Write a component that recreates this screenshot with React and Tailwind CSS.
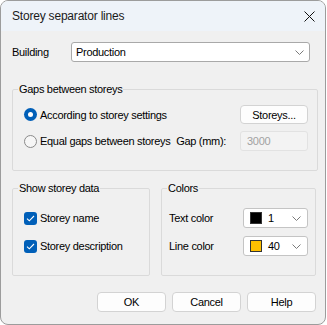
import { useState } from "react";

const FONT = "font-['Liberation_Sans','Arial',sans-serif]";

const Chevron = () => (
  <svg width="9" height="5" viewBox="0 0 9 5" className="text-[#7a7a7a]">
    <path d="M0.5 0.5 L4.5 4.5 L8.5 0.5" fill="none" stroke="currentColor" strokeWidth="1" />
  </svg>
);

const Radio = ({ checked, label, onClick }) => (
  <button type="button" onClick={onClick} className="flex items-center gap-[3px]">
    {checked ? (
      <span className="flex h-[13px] w-[13px] items-center justify-center rounded-full bg-[#005fb8]">
        <span className="h-[5px] w-[5px] rounded-full bg-white" />
      </span>
    ) : (
      <span className="h-[13px] w-[13px] rounded-full border border-[#8a8a8a] bg-[#f6f6f6]" />
    )}
    <span>{label}</span>
  </button>
);

const Check = ({ checked, label, onClick }) => (
  <button type="button" onClick={onClick} className="flex items-center gap-[3px]">
    {checked ? (
      <span className="flex h-[13px] w-[13px] items-center justify-center rounded-[3px] bg-[#005fb8]">
        <svg width="9" height="7" viewBox="0 0 9 7">
          <path d="M1 3.6 L3.3 5.8 L8 1" fill="none" stroke="white" strokeWidth="1.1" />
        </svg>
      </span>
    ) : (
      <span className="h-[13px] w-[13px] rounded-[3px] border border-[#8a8a8a] bg-[#f6f6f6]" />
    )}
    <span>{label}</span>
  </button>
);

const ColorCombo = ({ swatch, value }) => (
  <div className="flex h-[20px] w-[65px] items-center rounded-[3px] border border-[#c4c4c4] bg-white pl-[6px] pr-[6px]">
    <span className={`h-[12px] w-[12px] border border-[#333] ${swatch}`} />
    <span className="ml-[6px] flex-1">{value}</span>
    <Chevron />
  </div>
);

const Group = ({ title, className, children }) => (
  <fieldset className={`rounded-[2px] border border-[#dadada] pl-[5px] ${className}`}>
    <legend className="px-[1px] leading-[16px]">{title}</legend>
    {children}
  </fieldset>
);

export default function App() {
  const [mode, setMode] = useState("settings");
  const [showName, setShowName] = useState(true);
  const [showDesc, setShowDesc] = useState(true);

  return (
    <div className={`h-[325px] w-[327px] bg-white text-[11px] leading-[16px] tracking-[-0.3px] text-black ${FONT}`}>
      <div className="flex h-[325px] w-[326px] flex-col overflow-hidden rounded-[8px] border border-[#9c9c9c] bg-[#f0f0f0]">
        <div className="flex h-[30px] items-center justify-between bg-[#eef3f9] pl-[11px] pr-[10px]">
          <span className="text-[12px] tracking-[-0.2px] text-[#1b1b1b]">Storey separator lines</span>
          <svg width="11" height="11" viewBox="0 0 11 11">
            <path d="M0.5 0.5 L10.5 10.5 M10.5 0.5 L0.5 10.5" stroke="#111" strokeWidth="1" />
          </svg>
        </div>

        <div className="flex flex-1 flex-col pl-[11px] pr-[9px]">
          <div className="mt-[11px] flex items-center">
            <span className="w-[59px]">Building</span>
            <div className="flex h-[20px] w-[239px] items-center justify-between rounded-[3px] border border-[#a9a9a9] bg-white pl-[4px] pr-[5px]">
              <span>Production</span>
              <Chevron />
            </div>
          </div>

          <Group title="Gaps between storeys" className="mt-[19px] w-[306px] pb-[19px] pr-[9px]">
            <div className="flex flex-col gap-[7px] pl-[6px] pt-[8px]">
              <div className="flex h-[19px] items-center justify-between">
                <Radio checked={mode === "settings"} label="According to storey settings" onClick={() => setMode("settings")} />
                <button type="button" className="h-[19px] w-[68px] rounded-[4px] border border-[#d3d3d3] bg-[#fdfdfd]">
                  Storeys...
                </button>
              </div>
              <div className="flex h-[20px] items-center">
                <Radio checked={mode === "equal"} label="Equal gaps between storeys" onClick={() => setMode("equal")} />
                <span className="ml-auto mr-[14px]">Gap (mm):</span>
                <div className="flex h-[20px] w-[68px] items-center rounded-[3px] border border-[#e2e2e2] bg-[#f3f3f3] pl-[6px] text-[#a2a2a2]">
                  3000
                </div>
              </div>
            </div>
          </Group>

          <div className="mt-[9px] flex gap-[11px]">
            <Group title="Show storey data" className="w-[139px] pb-[19px]">
              <div className="flex flex-col gap-[8px] pl-[6px] pt-[12px]">
                <div className="flex h-[20px] items-center">
                  <Check checked={showName} label="Storey name" onClick={() => setShowName(!showName)} />
                </div>
                <div className="flex h-[20px] items-center">
                  <Check checked={showDesc} label="Storey description" onClick={() => setShowDesc(!showDesc)} />
                </div>
              </div>
            </Group>
            <Group title="Colors" className="w-[156px] pb-[19px] pr-[7px]">
              <div className="flex flex-col gap-[8px] pl-[2px] pt-[12px]">
                <div className="flex h-[20px] items-center justify-between">
                  <span>Text color</span>
                  <ColorCombo swatch="bg-black" value="1" />
                </div>
                <div className="flex h-[20px] items-center justify-between">
                  <span>Line color</span>
                  <ColorCombo swatch="bg-[#ffc000]" value="40" />
                </div>
              </div>
            </Group>
          </div>

          <div className="mt-[16px] flex justify-end gap-[6px]">
            {["OK", "Cancel", "Help"].map((b) => (
              <button key={b} type="button" className="h-[20px] w-[69px] rounded-[4px] border border-[#d3d3d3] bg-[#fdfdfd]">
                {b}
              </button>
            ))}
          </div>
        </div>
      </div>
    </div>
  );
}
